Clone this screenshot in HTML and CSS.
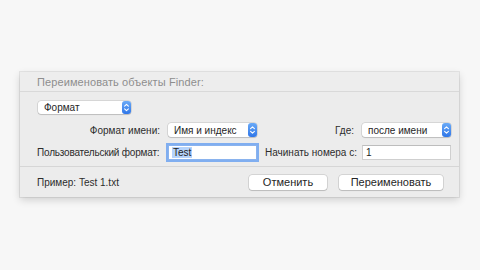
FILE: index.html
```html
<!DOCTYPE html>
<html lang="ru">
<head>
<meta charset="utf-8">
<link rel="stylesheet" href="styles.css">
</head>
<body>
<div class="stage">
  <div class="window">
    <div class="titlebar">Переименовать объекты Finder:</div>
    <div class="content">
      <div class="popup popup-format">
        <span class="popup-text">Формат</span>
        <span class="arrows"><svg width="9" height="13" viewBox="0 0 9 13"><path d="M2.6 5.2 L4.5 3.4 L6.4 5.2 M2.6 7.8 L4.5 9.6 L6.4 7.8" fill="none" stroke="#fff" stroke-width="1.1" stroke-linecap="round" stroke-linejoin="round"/></svg></span>
      </div>
      <div class="grid">
        <div class="label">Формат имени:</div>
        <div class="popup">
          <span class="popup-text">Имя и индекс</span>
          <span class="arrows"><svg width="9" height="14" viewBox="0 0 9 14"><path d="M2.6 5.6 L4.5 3.8 L6.4 5.6 M2.6 8.4 L4.5 10.2 L6.4 8.4" fill="none" stroke="#fff" stroke-width="1.1" stroke-linecap="round" stroke-linejoin="round"/></svg></span>
        </div>
        <div class="label">Где:</div>
        <div class="popup">
          <span class="popup-text">после имени</span>
          <span class="arrows"><svg width="9" height="14" viewBox="0 0 9 14"><path d="M2.6 5.6 L4.5 3.8 L6.4 5.6 M2.6 8.4 L4.5 10.2 L6.4 8.4" fill="none" stroke="#fff" stroke-width="1.1" stroke-linecap="round" stroke-linejoin="round"/></svg></span>
        </div>
        <div class="label label-tight">Пользовательский формат:</div>
        <div class="field focused"><span class="sel">Test</span></div>
        <div class="label">Начинать номера с:</div>
        <div class="field">1</div>
      </div>
    </div>
    <div class="footer">
      <div class="example">Пример: Test 1.txt</div>
      <div class="buttons">
        <div class="button btn-cancel">Отменить</div>
        <div class="button btn-rename">Переименовать</div>
      </div>
    </div>
  </div>
</div>
</body>
</html>
```
FILE: styles.css
```css
html, body {
  margin: 0;
  padding: 0;
  background: #f7f7f7;
  width: 480px;
  height: 270px;
  overflow: hidden;
}
body {
  font-family: "Liberation Sans", Arial, sans-serif;
  font-size: 10px;
  color: #2c2c2c;
}
.stage {
  padding: 72px 0 0 20px;
}
.window {
  width: 439px;
  height: 125px;
  background: #ececec;
  box-shadow: 0 0 0 1px rgba(0,0,0,0.07), 0 3px 8px rgba(0,0,0,0.16);
  display: flex;
  flex-direction: column;
}
.titlebar {
  height: 20px;
  box-sizing: border-box;
  border-bottom: 1px solid #d9d9d9;
  background: #ededed;
  padding-left: 17px;
  font-size: 11px;
  letter-spacing: 0.1px;
  line-height: 21px;
  color: #8e8e8e;
}
.content {
  padding: 9px 8px 0 17px;
  height: 75px;
  box-sizing: border-box;
  border-bottom: 1px solid #d6d6d6;
}
.popup {
  height: 14px;
  background: #fff;
  border-radius: 3px;
  box-shadow: 0 0 0 0.5px rgba(0,0,0,0.18), 0 1px 1px rgba(0,0,0,0.12);
  display: flex;
  align-items: center;
  justify-content: space-between;
}
.popup-format {
  width: 93px;
  height: 13px;
  margin-left: 1px;
}
.popup-text {
  padding-left: 6px;
  color: #262626;
}
.arrows {
  width: 9px;
  align-self: stretch;
  background: linear-gradient(#6aaaf7, #2f76e8);
  border-radius: 3px;
  display: flex;
  align-items: center;
  justify-content: center;
}
.arrows svg {
  display: block;
}
.grid {
  display: grid;
  grid-template-columns: 123px 89px 89px 89px;
  column-gap: 8px;
  row-gap: 8px;
  margin-top: 9px;
  align-items: center;
}
.label {
  text-align: right;
  white-space: nowrap;
  color: #2c2c2c;
}
.label-tight {
  letter-spacing: -0.2px;
  text-align: left;
}
.grid .popup {
  width: 89px;
}
.field {
  height: 15px;
  box-sizing: border-box;
  background: #fff;
  border: 1px solid #cfcfcf;
  border-top-color: #bdbdbd;
  padding-left: 3px;
  line-height: 13px;
  color: #222;
}
.field.focused {
  box-shadow: 0 0 0 2px #80aef0;
  border-color: #8ab3ee;
}
.sel {
  background: #b5d3fb;
  padding: 0 1px;
}
.footer {
  flex: 1;
  display: flex;
  align-items: center;
  justify-content: space-between;
  padding: 0 16px 0 17px;
}
.example {
  color: #2c2c2c;
}
.buttons {
  display: flex;
  gap: 12px;
}
.button {
  height: 15px;
  background: #fff;
  border-radius: 3px;
  box-shadow: 0 0 0 0.5px rgba(0,0,0,0.2), 0 1px 1px rgba(0,0,0,0.12);
  text-align: center;
  line-height: 15px;
  font-size: 11px;
  color: #262626;
}
.btn-cancel { width: 78px; }
.btn-rename { width: 104px; }
```
